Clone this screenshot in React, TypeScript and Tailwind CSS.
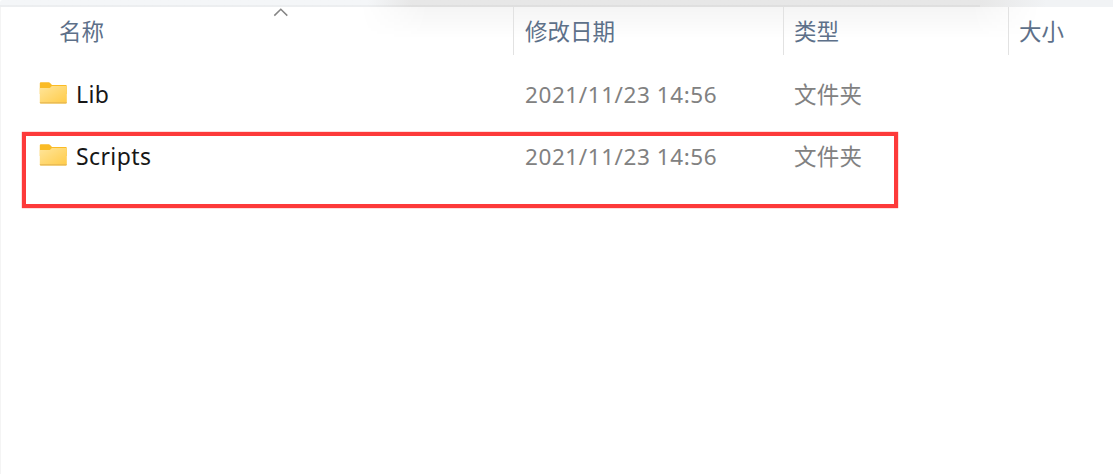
interface IItem {
  name: string;
  date: string;
  type: string;
}

const items: IItem[] = [
  { name: "Lib", date: "2021/11/23 14:56", type: "文件夹" },
  { name: "Scripts", date: "2021/11/23 14:56", type: "文件夹" },
];

const FolderIcon = () => (
  <svg width="28" height="22" viewBox="0 0 28 22" className="shrink-0">
    <defs>
      <linearGradient id="folder" x1="0" y1="0" x2="1" y2="1">
        <stop offset="0" stopColor="#ffe59a" />
        <stop offset="1" stopColor="#ffcb48" />
      </linearGradient>
    </defs>
    <path d="M0.8 1.3Q0.8 0.3 1.8 0.3H9.7Q10.5 0.3 11.1 0.9L13 3H26.8Q27.8 3 27.8 4V12H0.8Z" fill="#fabb25" />
    <path d="M0.8 6H10Q10.8 6 11.4 5.5L12.8 4H27.8V20.5Q27.8 21.4 26.8 21.4H1.8Q0.8 21.4 0.8 20.5Z" fill="url(#folder)" />
    <path d="M0.8 20.2H27.8V20.5Q27.8 21.4 26.8 21.4H1.8Q0.8 21.4 0.8 20.5Z" fill="#e6b752" />
  </svg>
);

const Header = () => (
  <header className="relative flex h-12 shrink-0 text-[22.5px] leading-[50px] text-[#5d7089]">
    <div className="w-[513px] pl-[59px]">名称</div>
    <div className="w-[270px] border-l border-[#e2e2e2] pl-[11px]">修改日期</div>
    <div className="w-[225px] border-l border-[#e2e2e2] pl-[10px]">类型</div>
    <div className="grow border-l border-[#e2e2e2] pl-[10px]">大小</div>
    {/* sort arrow */}
    <svg width="16" height="9" viewBox="0 0 16 9" className="absolute top-px left-[273px]">
      <path d="M1.3 7.6L7.8 1.3L14.3 7.6" fill="none" stroke="#858585" strokeWidth="1.5" />
    </svg>
  </header>
);

const Row = ({ name, date, type }: IItem) => (
  <li className="flex h-[62px] items-center text-[22.5px] text-[#818181]">
    <div className="flex w-[513px] items-center gap-[9px] pl-[39px] text-[#171717]">
      <div className="-mt-[5px]">
        <FolderIcon />
      </div>
      <span className="pb-0.5 text-[23px] tracking-[0.4px]">{name}</span>
    </div>
    <div className="w-[270px] pl-[12px] tracking-[0.57px]">{date}</div>
    <div className="pl-[11px] tracking-[0.3px]">{type}</div>
  </li>
);

const App = () => {
  return (
    <div className="relative flex h-[474px] w-[1113px] flex-col overflow-hidden bg-white font-['Noto_Sans','Noto_Sans_CJK_SC',sans-serif]">
      <div className="h-[7px] shrink-0 rounded-tl-[3px] border-b-2 border-black/3 bg-linear-to-r from-[#f4f6f8] from-33% via-[#e7e7e7] via-37% to-[#e7e7e7] to-88%">
        <div className="ml-auto h-[7px] w-[133px] bg-linear-to-r from-[#e7e7e7] to-[#f1f3f5] to-50%" />
      </div>
      {/* soft shadow that falls on the header */}
      <div className="absolute top-[7px] left-[360px] h-8 w-[680px] bg-linear-to-b from-black/4 to-transparent mask-x-from-90% mask-x-to-100%" />
      <div className="flex grow flex-col border-l border-[#f4f4f4]">
        <div className="-ml-px">
          <Header />
          <ul className="pt-[9px]">
            {items.map((item) => (
              <Row key={item.name} {...item} />
            ))}
          </ul>
        </div>
      </div>
      <div className="absolute top-[132px] left-[22px] h-[76px] w-[876px] border-4 border-[#fd3a3a] shadow-[0_0_1px_#fd3a3a]" />
    </div>
  );
};

export default App;
